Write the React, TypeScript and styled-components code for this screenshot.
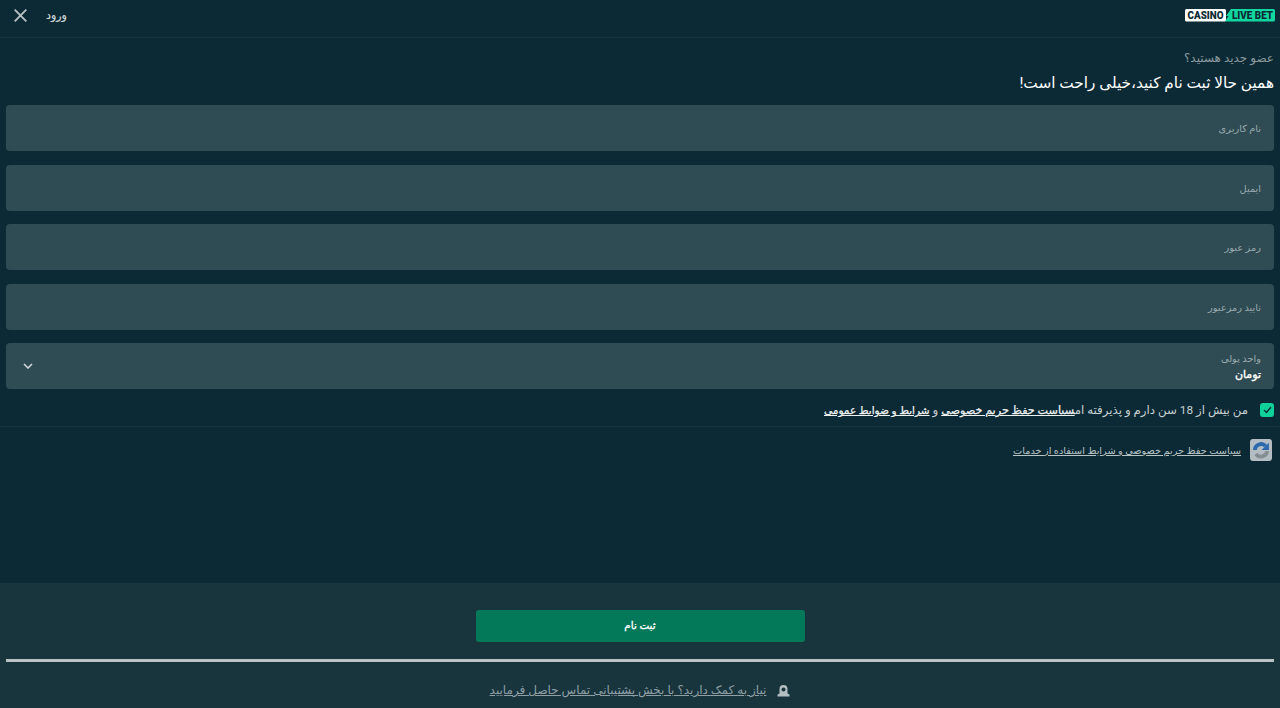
import React from 'react';
import styled, { createGlobalStyle } from 'styled-components';

const Global = createGlobalStyle`
  html, body { margin: 0; padding: 0; height: 100%; background: #0c2a35; }
  #root { height: 100%; }
  * { box-sizing: border-box; }
`;
const FONT = `Roboto, "DejaVu Sans", sans-serif`;

const Page = styled.div`
  height: 708px; display: flex; flex-direction: column; background: #0c2a35;
  font-family: ${FONT}; overflow: hidden;
`;
const Header = styled.header`
  height: 38px; flex: none; display: flex; align-items: center; justify-content: space-between;
  padding: 0 5px 8px 14px; border-bottom: 1px solid #15333d;
`;
const HeaderLeft = styled.div`display: flex; align-items: center; gap: 19px;`;
const CloseBtn = styled.button`
  all: unset; display: flex; width: 13px; height: 13px; margin-top: 1px; color: #b6c1c4;
`;
const LoginLink = styled.a`font-size: 11px; color: #d0d7d9; line-height: 16px; margin-top: 2px; -webkit-text-stroke: 0.2px;`;
const Logo = styled.div`display: flex; align-items: center;`;
const Main = styled.main`flex: 1; display: flex; flex-direction: column; padding: 12px 6px 0; direction: rtl;`;
const Sub = styled.div`font-size: 12px; line-height: 17px; color: #8b9a9f;`;
const Title = styled.h1`margin: 6px 0 12px; font-size: 15.3px; line-height: 20px; font-weight: 400; color: #fff;`;
const Fields = styled.div`display: flex; flex-direction: column; gap: 13.6px;`;
const Field = styled.div`
  height: 46px; border-radius: 4px; background: #2f4c54; padding: 2px 13px 0;
  display: flex; align-items: center; justify-content: space-between;
`;
const FieldLabel = styled.span`font-size: 9.8px; color: #9aabaf; line-height: 14px;`;
const Stack = styled.div`display: flex; flex-direction: column; gap: 1px;`;
const Value = styled.span`font-size: 11px; line-height: 15px; color: #fff; -webkit-text-stroke: 0.35px;`;
const Chevron = styled.span`display: flex; margin: 0 0 2px 4px; color: #d4dadc;`;
const Terms = styled.div`
  display: flex; align-items: center; gap: 12px; height: 38px; margin: 0 -6px; padding: 12px 6px 7px;
  border-bottom: 1px solid #15333d;
`;
const Check = styled.span`
  width: 14px; height: 14px; border-radius: 3px; background: #0fd19a; display: flex;
  align-items: center; justify-content: center; color: #0c2a35;
`;
const TermsText = styled.span`font-size: 11.8px; color: #c7d0d2; white-space: pre;`;
const StrongLink = styled.a<{ $size: number }>`
  color: #eef2f3; text-decoration: underline; font-size: ${(p) => p.$size}px; -webkit-text-stroke: 0.25px;
`;
const Recaptcha = styled.div`display: flex; align-items: center; gap: 9px; padding: 12px 2px 0 0;`;
const RecaptchaIcon = styled.span`
  width: 22px; height: 22px; border-radius: 3px; background: #b4bec2; display: flex; align-items: center; justify-content: center;
`;
const SmallLink = styled.a`font-size: 9.76px; color: #b8c3c6; text-decoration: underline;`;
const Footer = styled.footer`
  height: 125px; flex: none; background: #18353e; padding: 27px 6px 0; display: flex; flex-direction: column; align-items: center;
`;
const Submit = styled.button`
  width: 329px; height: 32px; border: 0; border-radius: 3px; background: #04795a; color: #fff; padding: 0 0 2px;
  font-family: ${FONT}; font-size: 10.4px; direction: rtl; -webkit-text-stroke: 0.3px;
`;
const Rule = styled.div`height: 3px; width: 100%; margin-top: 17px; background: #b9c3c6;`;
const Help = styled.a`
  margin-top: 20px; display: flex; align-items: center; gap: 11px; direction: rtl;
  font-size: 12px; color: #8f9fa4; text-decoration: underline; line-height: 16px;
`;

export default function App() {
  return (
    <Page>
      <Global />
      <Header>
        <HeaderLeft>
          <CloseBtn aria-label="بستن">
            <svg viewBox="0 0 13 13" width="13" height="13" fill="none" stroke="currentColor" strokeWidth="1.900">
              <path d="M.7.700l11.600 11.600M12.300.700.7 12.300" />
            </svg>
          </CloseBtn>
          <LoginLink>ورود</LoginLink>
        </HeaderLeft>
        <Logo>
          <svg width="90" height="14" viewBox="0 0 90 14">
            <rect x="0" y="1" width="41" height="12.500" rx="1.500" fill="#fff" />
            <path d="M46 1H88.500a1.500 1.500 0 0 1 1.500 1.500v9.500a1.500 1.500 0 0 1-1.500 1.500H40l3.500-5.500h-2.500z" fill="#12d6a0" />
            <text x="2.500" y="11" fontFamily="Roboto" fontWeight="900" fontSize="10.500" textLength="36" lengthAdjust="spacingAndGlyphs" fill="#0c2a35">CASINO</text>
            <text x="47" y="11" fontFamily="Roboto" fontWeight="900" fontSize="10.500" textLength="41" lengthAdjust="spacingAndGlyphs" fill="#0c2a35">LIVE BET</text>
          </svg>
        </Logo>
      </Header>
      <Main>
        <Sub>عضو جدید هستید؟</Sub>
        <Title>همین حالا ثبت نام کنید،خیلی راحت است!</Title>
        <Fields>
          <Field><FieldLabel>نام کاربری</FieldLabel></Field>
          <Field><FieldLabel>ایمیل</FieldLabel></Field>
          <Field><FieldLabel>رمز عبور</FieldLabel></Field>
          <Field><FieldLabel>تایید رمزعبور</FieldLabel></Field>
          <Field>
            <Stack>
              <FieldLabel>واحد پولی</FieldLabel>
              <Value>تومان</Value>
            </Stack>
            <Chevron>
              <svg width="10" height="6" viewBox="0 0 10 6" fill="none" stroke="currentColor" strokeWidth="1.500"><path d="M1 1l4 4 4-4" /></svg>
            </Chevron>
          </Field>
        </Fields>
        <Terms>
          <Check>
            <svg width="9" height="8" viewBox="0 0 9 8" fill="none" stroke="currentColor" strokeWidth="1.400"><path d="M1 4l2.500 2.500L8 1" /></svg>
          </Check>
          <TermsText>
            من بیش از 18 سن دارم و پذیرفته ام<StrongLink $size={11.2}>سیاست حفظ حریم خصوصی</StrongLink> و <StrongLink $size={10.5}>شرایط و ضوابط عمومی</StrongLink>
          </TermsText>
        </Terms>
        <Recaptcha>
          <RecaptchaIcon>
            <svg width="18" height="18" viewBox="0 0 16 16" fill="none">
              <path d="M2.500 8a5.500 5.500 0 0 1 9.500-3.500" stroke="#2a69ae" strokeWidth="3.400" />
              <path d="M15 1.500v6.500H8.500z" fill="#2a69ae" />
              <path d="M13.500 9a5.500 5.500 0 0 1-10 2.500" stroke="#858e92" strokeWidth="3.400" />
            </svg>
          </RecaptchaIcon>
          <SmallLink>سیاست حفظ حریم خصوصی و شرایط استفاده از خدمات</SmallLink>
        </Recaptcha>
      </Main>
      <Footer>
        <Submit>ثبت نام</Submit>
        <Rule />
        <Help>
          <svg width="13" height="14" viewBox="0 0 13 14" fill="#b3bec1">
            <path d="M2.500 6a4 4 0 0 1 8 0v4.500l2 1v2H.5v-2l2-1z" />
            <circle cx="6.500" cy="6.500" r="2" fill="#18353e" />
          </svg>
          <span>نیاز به کمک دارید؟ با بخش پشتیبانی تماس حاصل فرمایید</span>
        </Help>
      </Footer>
    </Page>
  );
}
